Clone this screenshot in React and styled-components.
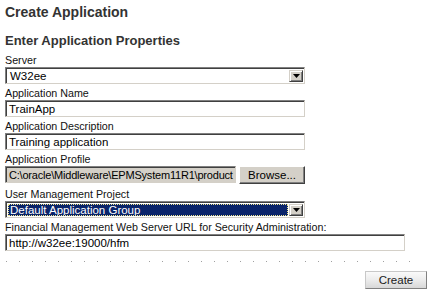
import React from "react";
import styled, { createGlobalStyle } from "styled-components";

const Global = createGlobalStyle`
  html, body { margin: 0; padding: 0; background: #ffffff; }
  body { font-family: "Liberation Sans", Arial, sans-serif; }
`;

const Page = styled.div`
  width: 438px;
  height: 304px;
  box-sizing: border-box;
  padding: 3px 11px 0 5px;
  background: #fff;
  color: #000;
`;

const Title = styled.h1`
  margin: 0;
  font-size: 14px;
  line-height: 18px;
  font-weight: bold;
  color: #333333;
`;

const SubTitle = styled.h2`
  margin: 12px 0 4px 0;
  font-size: 13px;
  line-height: 16px;
  font-weight: bold;
  color: #333333;
`;

const Group = styled.div`
  display: flex;
  flex-direction: column;
  margin-top: ${(p) => p.$gap ?? 2}px;
`;

const Label = styled.div`
  font-size: 10.7px;
  line-height: 14px;
  color: #111;
  white-space: nowrap;
`;

const Row = styled.div`
  display: flex;
  align-items: flex-start;
  gap: 3px;
`;

const Field = styled.div`
  box-sizing: border-box;
  width: ${(p) => p.$w}px;
  height: 17px;
  display: flex;
  align-items: center;
  border-style: solid;
  border-width: 1px;
  border-color: #808080 #d4d0c8 #d4d0c8 #808080;
  box-shadow: inset 1px 1px 0 #404040;
  background: ${(p) => (p.$disabled ? "#d4d0c8" : "#ffffff")};
  padding: 1px 2px 0 3px;
  font-size: ${(p) => (p.$disabled ? 11 : 11.5)}px;
  letter-spacing: ${(p) => (p.$disabled ? -0.2 : 0)}px;
  color: #000;
  white-space: nowrap;
  overflow: hidden;
`;

const SelectBox = styled.div`
  box-sizing: border-box;
  width: 300px;
  height: 17px;
  display: flex;
  align-items: stretch;
  border-style: solid;
  border-width: 1px;
  border-color: #808080 #d4d0c8 #d4d0c8 #808080;
  box-shadow: inset 1px 1px 0 #404040;
  background: #fff;
  padding: 2px 1px 1px 2px;
`;

const SelectValue = styled.div`
  flex: 1;
  display: flex;
  align-items: center;
  box-sizing: border-box;
  font-size: 11.5px;
  padding-left: 1px;
  color: ${(p) => (p.$active ? "#ffffff" : "#000")};
  background: ${(p) => (p.$active ? "#0a246a" : "transparent")};
  border: 1px dotted ${(p) => (p.$active ? "#f0e68c" : "transparent")};
  white-space: nowrap;
  overflow: hidden;
  margin-right: 1px;
`;

const ArrowButton = styled.div`
  box-sizing: border-box;
  width: 14px;
  display: flex;
  align-items: center;
  justify-content: center;
  background: #d4d0c8;
  border-style: solid;
  border-width: 1px;
  border-color: #d4d0c8 #404040 #404040 #d4d0c8;
  box-shadow: inset 1px 1px 0 #ffffff, inset -1px -1px 0 #808080;
`;

const Button3D = styled.div`
  box-sizing: border-box;
  width: ${(p) => p.$w}px;
  height: 18px;
  display: flex;
  align-items: center;
  justify-content: center;
  background: #d4d0c8;
  border-style: solid;
  border-width: 1px;
  border-color: #ffffff #404040 #404040 #ffffff;
  box-shadow: inset -1px -1px 0 #808080;
  font-size: 11.5px;
  color: #000;
`;

const Dots = styled.div`
  margin-top: 10px;
  width: 416px;
  height: 1px;
  background: repeating-linear-gradient(
    to right,
    #a0a0a0 0 1px,
    transparent 1px 13px
  );
  margin-left: 1px;
`;

const Footer = styled.div`
  display: flex;
  justify-content: flex-end;
  margin-top: 9px;
`;

const CreateButton = styled.div`
  box-sizing: border-box;
  width: 62px;
  height: 18px;
  display: flex;
  align-items: center;
  justify-content: center;
  font-size: 11.5px;
  color: #1a1a1a;
  border: 1px solid #a0a0a0;
  border-color: #c8c8c8 #808080 #808080 #c8c8c8;
  background: linear-gradient(to bottom, #fafafa 0%, #ececec 50%, #d8d8d8 100%);
`;

const Arrow = () => (
  <svg width="7" height="4" viewBox="0 0 7 4">
    <polygon points="0,0 7,0 3.5,4" fill="#000" />
  </svg>
);

const Select = ({ value, active }) => (
  <SelectBox>
    <SelectValue $active={active}>{value}</SelectValue>
    <ArrowButton>
      <Arrow />
    </ArrowButton>
  </SelectBox>
);

export default function App() {
  return (
    <>
      <Global />
      <Page>
        <Title>Create Application</Title>
        <SubTitle>Enter Application Properties</SubTitle>
        <Group $gap={0}>
          <Label>Server</Label>
          <Select value="W32ee" />
        </Group>
        <Group>
          <Label>Application Name</Label>
          <Field $w={300}>TrainApp</Field>
        </Group>
        <Group>
          <Label>Application Description</Label>
          <Field $w={300}>Training application</Field>
        </Group>
        <Group>
          <Label>Application Profile</Label>
          <Row>
            <Field $w={231} $disabled>
              C:\oracle\Middleware\EPMSystem11R1\product
            </Field>
            <Button3D $w={66}>Browse...</Button3D>
          </Row>
        </Group>
        <Group $gap={3}>
          <Label>User Management Project</Label>
          <Select value="Default Application Group" active />
        </Group>
        <Group>
          <Label>Financial Management Web Server URL for Security Administration:</Label>
          <Field $w={400}>http://w32ee:19000/hfm</Field>
        </Group>
        <Dots />
        <Footer>
          <CreateButton>Create</CreateButton>
        </Footer>
      </Page>
    </>
  );
}
